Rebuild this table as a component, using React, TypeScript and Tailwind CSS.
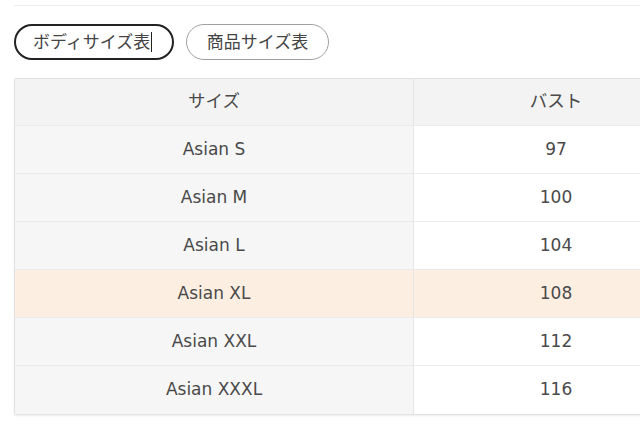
import React from "react";

const rows = [
  { size: "Asian S", bust: "97" },
  { size: "Asian M", bust: "100" },
  { size: "Asian L", bust: "104" },
  { size: "Asian XL", bust: "108", hl: true },
  { size: "Asian XXL", bust: "112" },
  { size: "Asian XXXL", bust: "116" },
];

export default function App() {
  return (
    <div
      className="w-[640px] h-[429px] overflow-hidden bg-white text-[#333]"
      style={{ fontFamily: '"Open Sans", "Noto Sans CJK JP", sans-serif' }}
    >
      <div className="ml-[14px] mt-[5px] h-px w-[700px] bg-[#ececec]" />
      <div className="ml-[14px] mt-[18px] flex gap-[12px]">
        <div className="h-[36px] w-[160px] rounded-full border-2 border-[#222] flex items-center pl-[17px] text-[17px] text-[#444]">
          <span>ボディサイズ表</span>
          <span className="ml-[1px] h-[20px] w-px bg-[#222]" />
        </div>
        <div className="h-[36px] w-[143px] rounded-full border border-[#a0a0a0] flex items-center justify-center text-[17px] text-[#444]">
          商品サイズ表
        </div>
      </div>
      <div
        className="ml-[14px] mt-[18px] w-[760px] border border-[#e2e2e2] rounded-[2px] shadow-[0_1px_2px_rgba(0,0,0,0.08)] text-[17px] text-[#4a4a4a]"
        style={{ fontFamily: '"DejaVu Sans", "Noto Sans CJK JP", sans-serif' }}
      >
        <div
          className="flex h-[47px] bg-[#f3f3f3] border-b border-[#ebebeb] text-[17.5px]"
          style={{ fontFamily: '"Noto Sans CJK JP", sans-serif' }}
        >
          <div className="w-[399px] flex items-center justify-center border-r border-[#e6e6e6] pb-[3px]">サイズ</div>
          <div className="w-[284px] flex items-center justify-center pb-[3px]">バスト</div>
        </div>
        {rows.map((r, i) => (
          <div
            key={r.size}
            className={
              "flex h-[48px] " +
              (i < rows.length - 1 ? "border-b border-[#ebebeb] " : "") +
              (r.hl ? "bg-[#fdeee2]" : "")
            }
          >
            <div
              className={
                "w-[399px] flex items-center justify-center border-r border-[#e6e6e6] " +
                (r.hl ? "" : "bg-[#f6f6f6]")
              }
            >
              {r.size}
            </div>
            <div className={"w-[284px] flex items-center justify-center " + (r.hl ? "" : "bg-white")}>
              {r.bust}
            </div>
          </div>
        ))}
      </div>
    </div>
  );
}
